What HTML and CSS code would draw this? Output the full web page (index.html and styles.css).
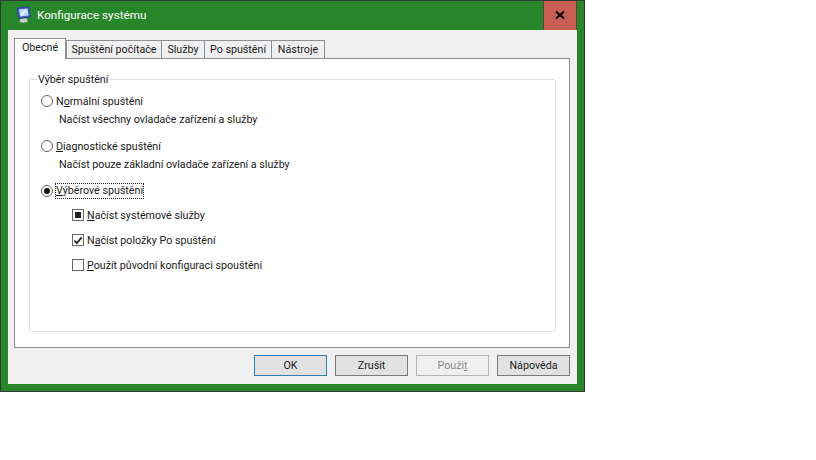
FILE: index.html
```html
<!DOCTYPE html>
<html lang="cs">
<head>
    <meta charset="UTF-8">
    <title>Konfigurace systému</title>
    <link rel="stylesheet" href="styles.css">
</head>
<body>
    <div class="window">
        <div class="titlebar">
            <svg class="app-icon" width="18" height="18" viewBox="0 0 18 18">
                <path d="M2 2 L14 0.5 L15.5 11 L3.5 12.5 Z" fill="#3f62b5" stroke="#2b3f86" stroke-width="0.8"/>
                <path d="M4 3.5 L12.5 2.5 L13.5 9.5 L5 10.5 Z" fill="#b9dcf5"/>
                <path d="M6 9 L11 4" stroke="#fff" stroke-width="1.2"/>
                <path d="M5.5 13 L11.5 12.3 L13 15.5 Q9 17.5 4.5 16 Z" fill="#c9cdd0"/>
            </svg>
            <span class="title">Konfigurace systému</span>
            <div class="close-btn"><svg width="10" height="8" viewBox="0 0 10 8"><path d="M1 0.5 L9 7.5 M9 0.5 L1 7.5" stroke="#000" stroke-width="2"/></svg></div>
        </div>
        <div class="client">
            <div class="tabs">
                <div class="tab tab-general active">Obecné</div>
                <div class="tab tab-boot">Spuštění počítače</div>
                <div class="tab tab-services">Služby</div>
                <div class="tab tab-startup">Po spuštění</div>
                <div class="tab tab-tools">Nástroje</div>
            </div>
            <div class="page">
                <div class="group">
                    <div class="group-label">Výběr spuštění</div>
                    <div class="option">
                        <span class="radio"></span>
                        <span>N<u>o</u>rmální spuštění</span>
                    </div>
                    <div class="hint">Načíst všechny ovladače zařízení a služby</div>
                    <div class="option">
                        <span class="radio"></span>
                        <span><u>D</u>iagnostické spuštění</span>
                    </div>
                    <div class="hint">Načíst pouze základní ovladače zařízení a služby</div>
                    <div class="option">
                        <span class="radio checked"></span>
                        <span class="focused"><u>V</u>ýběrové spuštění</span>
                    </div>
                    <div class="checks">
                        <div class="check-row">
                            <span class="check mixed"></span>
                            <span><u>N</u>ačíst systémové služby</span>
                        </div>
                        <div class="check-row">
                            <span class="check">
                                <svg width="11" height="11" viewBox="0 0 11 11"><path d="M1.5 5.5 L4.2 8.5 L9.5 2" fill="none" stroke="#222" stroke-width="2"/></svg>
                            </span>
                            <span>N<u>a</u>číst položky Po spuštění</span>
                        </div>
                        <div class="check-row">
                            <span class="check"></span>
                            <span><u>P</u>oužít původní konfiguraci spouštění</span>
                        </div>
                    </div>
                </div>
            </div>
            <div class="buttons">
                <div class="btn default">OK</div>
                <div class="btn">Zrušit</div>
                <div class="btn disabled">Použi<u>t</u></div>
                <div class="btn">Nápověda</div>
            </div>
        </div>
    </div>
</body>
</html>
```

FILE: styles.css
```css
* {
    margin: 0;
    padding: 0;
    box-sizing: border-box;
}

body {
    background: #fff;
    font-family: Roboto, "Open Sans", sans-serif;
    font-size: 10.7px;
    color: #1a1a1a;
    overflow: hidden;
}

u {
    text-underline-offset: 1px;
}

.window {
    width: 585px;
    height: 392px;
    background: #28862a;
    border: 1px solid #2f3a33;
    padding: 0 7px 7px 7px;
    display: flex;
    flex-direction: column;
}

.titlebar {
    height: 29px;
    display: flex;
    align-items: center;
    flex-shrink: 0;
}

.app-icon {
    margin-left: 7px;
    margin-top: -2px;
}

.title {
    color: #fff;
    font-size: 11.7px;
    margin-left: 4px;
    flex: 1;
    margin-top: -1px;
}

.close-btn {
    width: 34px;
    height: 30px;
    margin-top: 1px;
    background: #c75f55;
    border: 1px solid #6b3c3c;
    border-top: 0;
    display: flex;
    align-items: center;
    justify-content: center;
    padding-bottom: 1px;
}

.client {
    flex: 1;
    background: #f0f0f0;
    padding: 8px 7px 0 6px;
}

.tabs {
    display: flex;
    height: 20px;
    position: relative;
    z-index: 1;
}

.tab {
    height: 19px;
    margin-top: 2px;
    background: #f0f0f0;
    border: 1px solid #8f8f98;
    margin-left: -1px;
    line-height: 17px;
    white-space: nowrap;
    text-align: center;
}

.tab-boot {
    width: 96px;
    margin-left: 0;
}

.tab-services {
    width: 44px;
}

.tab-startup {
    width: 68px;
}

.tab-tools {
    width: 54px;
}

.tab.active {
    margin-top: 0;
    margin-left: 0;
    height: 21px;
    width: 52px;
    background: #fff;
    border-bottom: 0;
}

.page {
    height: 290px;
    background: #fff;
    border: 1px solid #8f8f98;
    padding: 20px 13px 15px 14px;
}

.group {
    height: 253px;
    border: 1px solid #dce2e8;
    border-radius: 3px;
    padding: 0 0 0 11px;
}

.group-label {
    background: #fff;
    width: fit-content;
    margin-top: -8px;
    margin-left: -4px;
    padding: 0 2px 0 1px;
    height: 16px;
    line-height: 16px;
}

.option {
    display: flex;
    align-items: center;
    height: 16px;
    gap: 3px;
}

.group-label + .option {
    margin-top: 5px;
}

.hint {
    margin-left: 18px;
    height: 16px;
    line-height: 16px;
    margin-top: 3px;
    margin-bottom: 10px;
}

.radio {
    width: 12px;
    height: 12px;
    border: 1px solid #666;
    border-radius: 50%;
    background: #fff;
    flex-shrink: 0;
    display: flex;
    align-items: center;
    justify-content: center;
}

.radio.checked::after {
    content: "";
    width: 6px;
    height: 6px;
    border-radius: 50%;
    background: #111;
}

.focused {
    outline: 1px dotted #222;
    line-height: 14px;
}

.checks {
    margin-left: 31px;
    margin-top: 8px;
    display: flex;
    flex-direction: column;
    gap: 9px;
}

.check-row {
    display: flex;
    align-items: center;
    height: 16px;
    gap: 3px;
}

.check {
    width: 12px;
    height: 12px;
    border: 1px solid #666;
    background: #fff;
    flex-shrink: 0;
    display: flex;
    align-items: center;
    justify-content: center;
}

.check.mixed::after {
    content: "";
    width: 6px;
    height: 6px;
    background: #222;
}

.buttons {
    display: flex;
    justify-content: flex-end;
    gap: 8px;
    margin-top: 7px;
}

.btn {
    width: 73px;
    height: 21px;
    background: #e1e1e1;
    border: 1px solid #7a7a7a;
    text-align: center;
    line-height: 19px;
}

.btn.default {
    border-color: #2f7fb5;
}

.btn.disabled {
    background: #f0f0f0;
    border-color: #b5b5b5;
    color: #8a8a8a;
}
```
